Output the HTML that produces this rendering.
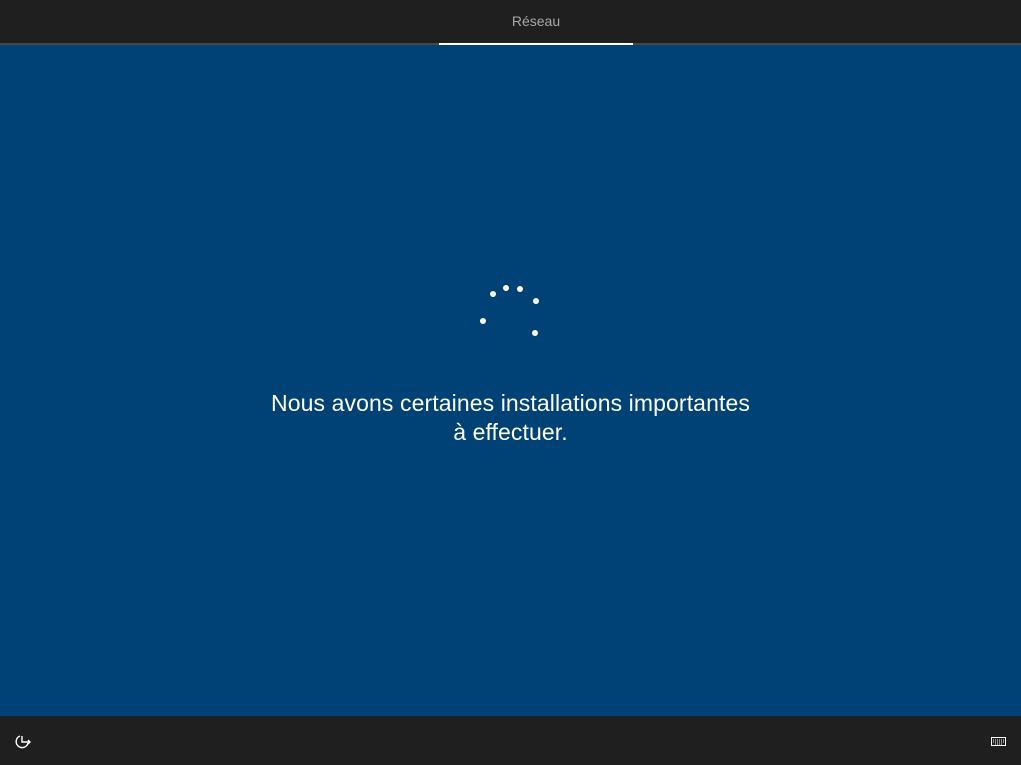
<!DOCTYPE html>
<html><head><style>
body{margin:0;width:1021px;height:765px;overflow:hidden;background:#1f1f1f;font-family:"Liberation Sans",sans-serif;position:relative}
.top{position:absolute;left:0;top:0;width:1021px;height:43px;background:#1f1f1f}
.tab{position:absolute;top:13px;left:439px;width:194px;text-align:center;color:#a8a8a8;font-size:14px}
.line{position:absolute;top:43px;left:0;width:1021px;height:2px;background:#474747}
.sel{position:absolute;top:43px;left:439px;width:194px;height:2px;background:#fff}
.blue{position:absolute;top:45px;left:0;width:1021px;height:671px;background:#004275}
.msg{position:absolute;top:389px;left:0;width:1021px;text-align:center;color:#fff;font-size:23px;letter-spacing:0.1px;line-height:29px}
.d{position:absolute;width:6px;height:6px;border-radius:50%;background:#fff}
</style></head><body>
<div class="top"><div class="tab">Réseau</div></div>
<div class="line"></div><div class="sel"></div>
<div class="blue"></div>
<div class="d" style="left:490px;top:291px"></div>
<div class="d" style="left:503px;top:285px"></div>
<div class="d" style="left:517px;top:286px"></div>
<div class="d" style="left:533px;top:298px"></div>
<div class="d" style="left:480px;top:318px"></div>
<div class="d" style="left:532px;top:330px"></div>
<div class="msg">Nous avons certaines installations importantes<br>à effectuer.</div>
<svg style="position:absolute;left:14px;top:733px" width="20" height="18" viewBox="0 0 20 18"><path d="M6 3 A6 6 0 1 0 14 10" fill="none" stroke="#fff" stroke-width="1.4"/><path d="M8 3 V9 H16 M14 7 L16 9 L14 11" fill="none" stroke="#fff" stroke-width="1.4"/></svg>
<svg style="position:absolute;left:991px;top:737px" width="15" height="9" viewBox="0 0 15 9"><rect x="0.5" y="0.5" width="14" height="8" fill="none" stroke="#fff"/><path d="M2 3h11M2 5h11M4 7h7" stroke="#fff" stroke-dasharray="1 1"/></svg>
</body></html>
